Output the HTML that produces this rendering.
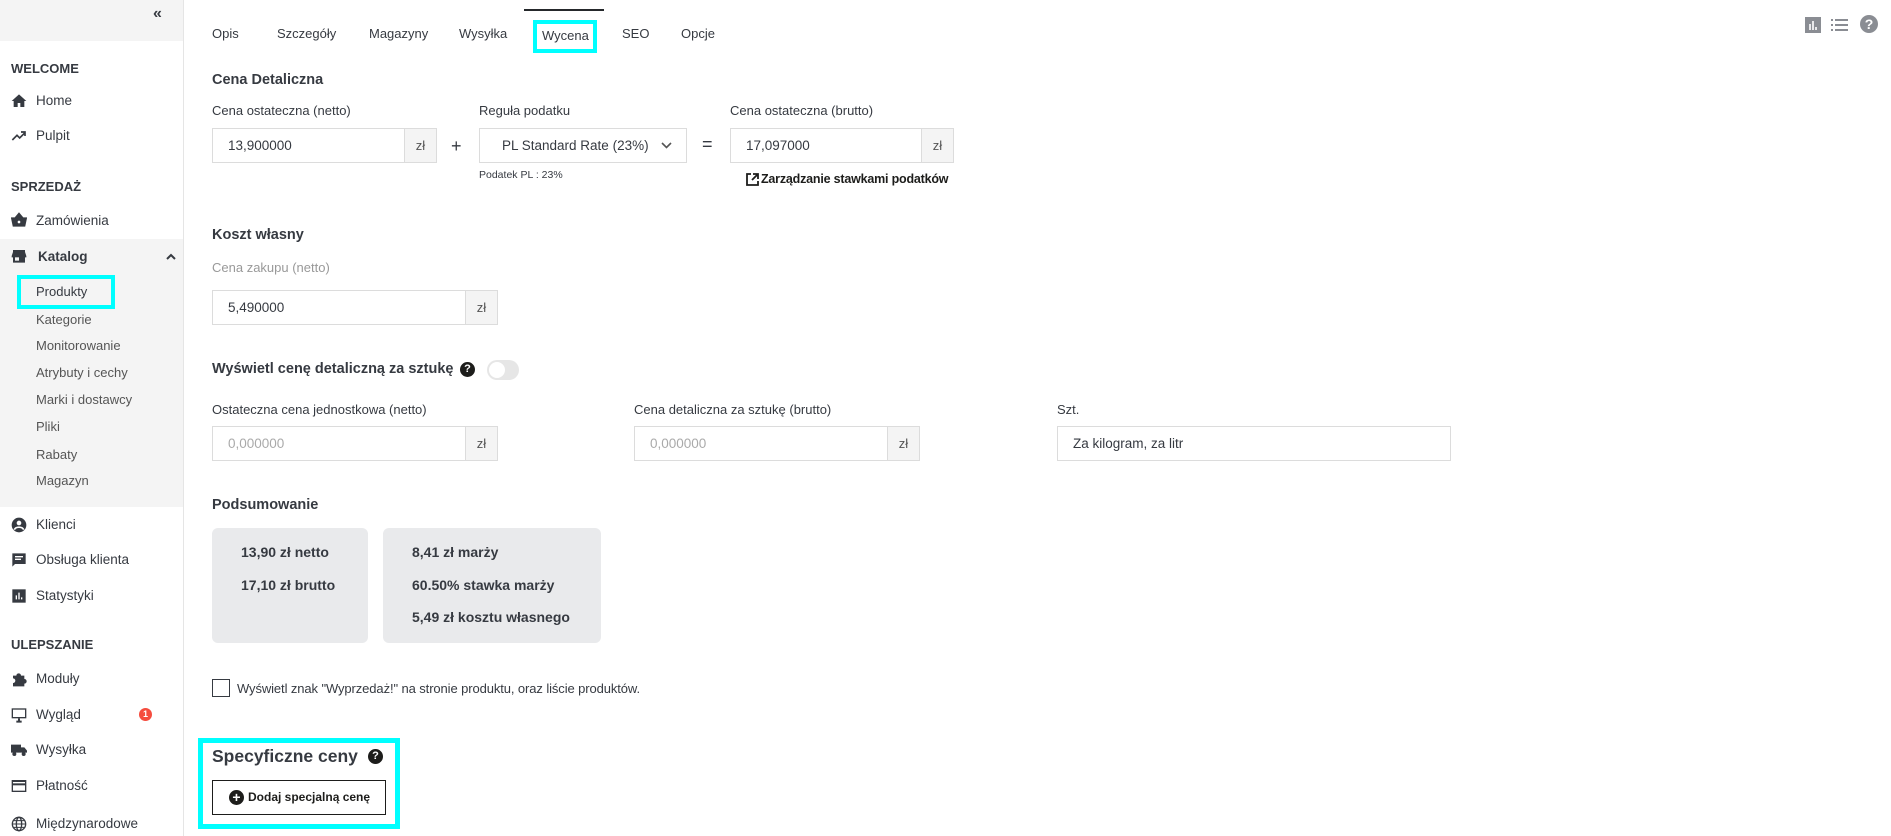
<!DOCTYPE html>
<html><head><meta charset="utf-8"><style>
*{box-sizing:border-box;margin:0;padding:0}
body{width:1891px;height:836px;overflow:hidden;background:#fff;font-family:"Liberation Sans",sans-serif;color:#363a41;font-size:13px;position:relative}
.a{position:absolute;white-space:nowrap}
#sb{position:absolute;left:0;top:0;width:184px;height:836px;background:#fff;border-right:1px solid #e5e5e5}
.sec{font-weight:bold;font-size:13px;color:#363a41}
.it{font-size:13.5px;color:#363a41}
.sub{font-size:13px;color:#555}
.ic{position:absolute;left:11px;width:16px;height:16px}
.lbl{font-size:13px;color:#363a41}
.inp{position:absolute;height:35px;border:1px solid #dcdcdc;background:#fff;font-size:13.5px;padding-left:15px;line-height:33px}
.add{position:absolute;right:0;top:0;bottom:0;width:32px;background:#f4f4f4;border-left:1px solid #dcdcdc;text-align:center;color:#555;font-size:13px}
.h{font-weight:bold;font-size:14.5px}
.box{position:absolute;background:#e9eaec;border-radius:6px;top:528px;height:115px}
.box div{position:absolute;font-weight:bold;font-size:14px;white-space:nowrap}
.q{display:inline-block;width:15px;height:15px;border-radius:50%;background:#1d1d1b;color:#fff;font-size:11px;text-align:center;line-height:15px;font-weight:bold}
</style></head><body>
<div id="sb">
<div style="position:absolute;left:0;top:0;width:183px;height:41px;background:#f4f4f4"></div>
<div class="a" style="left:153px;top:5px;font-size:16px;font-weight:bold;color:#363a41">«</div>
<div class="a sec" style="left:11px;top:61px">WELCOME</div>
<svg class="ic" style="top:93px" viewBox="0 0 24 24"><path d="M10 21v-6h4v6h6v-9h3L12 2 1 12h3v9z" fill="#363a41"/></svg>
<div class="a it" style="left:36px;top:93px">Home</div>
<svg class="ic" style="top:128px" viewBox="0 0 24 24"><path d="M2 18l7-7 4 4 8-8M15 6h6v6" stroke="#363a41" stroke-width="2.5" fill="none"/></svg>
<div class="a it" style="left:36px;top:128px">Pulpit</div>
<div class="a sec" style="left:11px;top:179px">SPRZEDAŻ</div>
<svg class="ic" style="top:212px" viewBox="0 0 24 24"><path d="M1 9h22l-2.5 12h-17z M6 9l6-7 6 7" fill="#363a41" stroke="#363a41" stroke-width="2"/><circle cx="12" cy="15" r="2" fill="#fff"/></svg>
<div class="a it" style="left:36px;top:213px">Zamówienia</div>
<div style="position:absolute;left:0;top:239px;width:183px;height:268px;background:#f4f4f4"></div>
<svg class="ic" style="top:248px" viewBox="0 0 24 24"><path d="M3 3h18v3l2 6v2h-2v8H3v-8H1v-2l2-6z" fill="#363a41"/><rect x="6" y="14" width="6" height="5" fill="#f4f4f4"/></svg>
<div class="a it" style="left:38px;top:249px;font-weight:bold">Katalog</div>
<svg class="a" style="left:166px;top:253px" width="10" height="7" viewBox="0 0 10 7"><path d="M1 6l4-4 4 4" stroke="#363a41" stroke-width="2" fill="none"/></svg>
<div class="a" style="left:17px;top:275px;width:98px;height:34px;border:4px solid #0ff"></div>
<div class="a sub" style="left:36px;top:284px;color:#363a41">Produkty</div>
<div class="a sub" style="left:36px;top:312px">Kategorie</div>
<div class="a sub" style="left:36px;top:338px">Monitorowanie</div>
<div class="a sub" style="left:36px;top:365px">Atrybuty i cechy</div>
<div class="a sub" style="left:36px;top:392px">Marki i dostawcy</div>
<div class="a sub" style="left:36px;top:419px">Pliki</div>
<div class="a sub" style="left:36px;top:447px">Rabaty</div>
<div class="a sub" style="left:36px;top:473px">Magazyn</div>
<svg class="ic" style="top:517px" viewBox="0 0 24 24"><circle cx="12" cy="12" r="11" fill="#363a41"/><circle cx="12" cy="9" r="3.5" fill="#fff"/><path d="M5 19c2-5 12-5 14 0" stroke="#fff" stroke-width="2.5" fill="none"/></svg>
<div class="a it" style="left:36px;top:517px">Klienci</div>
<svg class="ic" style="top:552px" viewBox="0 0 24 24"><path d="M2 2h20v16H6l-4 4z" fill="#363a41"/><path d="M6 7h12M6 11h9" stroke="#fff" stroke-width="2"/></svg>
<div class="a it" style="left:36px;top:552px">Obsługa klienta</div>
<svg class="ic" style="top:588px" viewBox="0 0 24 24"><rect x="2" y="2" width="20" height="20" fill="#363a41"/><path d="M8 17v-6M12 17V7M16 17v-3" stroke="#fff" stroke-width="2"/></svg>
<div class="a it" style="left:36px;top:588px">Statystyki</div>
<div class="a sec" style="left:11px;top:637px">ULEPSZANIE</div>
<svg class="ic" style="top:671px" viewBox="0 0 24 24"><path d="M3 7h5a3.5 3.5 0 017 0h5v5a3.5 3.5 0 010 7v4H3v-5a3.5 3.5 0 000-7z" fill="#363a41"/></svg>
<div class="a it" style="left:36px;top:671px">Moduły</div>
<svg class="ic" style="top:707px" viewBox="0 0 24 24"><rect x="1" y="2" width="22" height="15" fill="#363a41"/><rect x="3" y="4" width="18" height="11" fill="#fff"/><path d="M8 22h8M12 17v5" stroke="#363a41" stroke-width="3"/></svg>
<div class="a it" style="left:36px;top:707px">Wygląd</div>
<div class="a" style="left:139px;top:708px;width:13px;height:13px;border-radius:50%;background:#f54c3e;color:#fff;font-size:9px;text-align:center;line-height:13px;font-weight:bold">1</div>
<svg class="ic" style="top:742px" viewBox="0 0 24 24"><path d="M0 4h15v12H0zM15 8h5l4 5v3h-9z" fill="#363a41"/><circle cx="5" cy="18" r="3" fill="#363a41"/><circle cx="19" cy="18" r="3" fill="#363a41"/></svg>
<div class="a it" style="left:36px;top:742px">Wysyłka</div>
<svg class="ic" style="top:778px" viewBox="0 0 24 24"><rect x="1" y="3" width="22" height="18" fill="#363a41"/><rect x="3" y="6" width="18" height="2" fill="#fff"/><rect x="3" y="11" width="18" height="8" fill="#fff"/></svg>
<div class="a it" style="left:36px;top:778px">Płatność</div>
<svg class="ic" style="top:816px" viewBox="0 0 24 24"><circle cx="12" cy="12" r="10" stroke="#363a41" stroke-width="2" fill="none"/><ellipse cx="12" cy="12" rx="4" ry="10" stroke="#363a41" stroke-width="2" fill="none"/><path d="M2 12h20M4 7h16M4 17h16" stroke="#363a41" stroke-width="1.5"/></svg>
<div class="a it" style="left:36px;top:816px">Międzynarodowe</div>
</div>

<div class="a" style="left:524px;top:9px;width:80px;height:2px;background:#25282b"></div>
<div class="a lbl" style="left:212px;top:26px">Opis</div>
<div class="a lbl" style="left:277px;top:26px">Szczegóły</div>
<div class="a lbl" style="left:369px;top:26px">Magazyny</div>
<div class="a lbl" style="left:459px;top:26px">Wysyłka</div>
<div class="a" style="left:533px;top:20px;width:64px;height:33px;border:4px solid #0ff"></div>
<div class="a lbl" style="left:542px;top:28px">Wycena</div>
<div class="a lbl" style="left:622px;top:26px">SEO</div>
<div class="a lbl" style="left:681px;top:26px">Opcje</div>
<svg class="a" style="left:1805px;top:17px" width="16" height="16" viewBox="0 0 16 16"><rect width="16" height="16" fill="#8a8d93"/><path d="M5 13V7M8 13V4M11 13v-3" stroke="#fff" stroke-width="1.6"/></svg>
<svg class="a" style="left:1831px;top:18px" width="17" height="14" viewBox="0 0 17 14"><path d="M0 2h2M0 7h2M0 12h2M4 2h13M4 7h13M4 12h13" stroke="#8a8d93" stroke-width="2"/></svg>
<div class="a" style="left:1860px;top:15px;width:18px;height:18px;border-radius:50%;background:#8a8d93;color:#fff;font-weight:bold;font-size:14px;text-align:center;line-height:18px">?</div>

<div class="a h" style="left:212px;top:72px">Cena Detaliczna</div>
<div class="a lbl" style="left:212px;top:103px">Cena ostateczna (netto)</div>
<div class="inp" style="left:212px;top:128px;width:225px">13,900000<div class="add">zł</div></div>
<div class="a" style="left:451px;top:136px;font-size:18px">+</div>
<div class="a lbl" style="left:479px;top:103px">Reguła podatku</div>
<div class="inp" style="left:479px;top:128px;width:208px;padding-left:22px">PL Standard Rate (23%)<svg style="position:absolute;right:14px;top:13px" width="11" height="8" viewBox="0 0 11 8"><path d="M1 1l4.5 4.5L10 1" stroke="#555" stroke-width="1.6" fill="none"/></svg></div>
<div class="a" style="left:479px;top:169px;font-size:10.5px">Podatek PL : 23%</div>
<div class="a" style="left:702px;top:134px;font-size:18px">=</div>
<div class="a lbl" style="left:730px;top:103px">Cena ostateczna (brutto)</div>
<div class="inp" style="left:730px;top:128px;width:224px">17,097000<div class="add">zł</div></div>
<svg class="a" style="left:746px;top:173px" width="13" height="13" viewBox="0 0 13 13"><path d="M5 1H1v11h11V8M7 1h5v5M12 1L6 7" stroke="#1d1d1b" stroke-width="1.8" fill="none"/></svg>
<div class="a" style="left:761px;top:172px;font-weight:bold;font-size:12.5px;color:#1d1d1b;letter-spacing:-0.2px">Zarządzanie stawkami podatków</div>

<div class="a h" style="left:212px;top:227px">Koszt własny</div>
<div class="a lbl" style="left:212px;top:260px;color:#999">Cena zakupu (netto)</div>
<div class="inp" style="left:212px;top:290px;width:286px">5,490000<div class="add">zł</div></div>

<div class="a h" style="left:212px;top:361px">Wyświetl cenę detaliczną za sztukę</div>
<div class="a q" style="left:460px;top:362px">?</div>
<div class="a" style="left:487px;top:360px;width:32px;height:20px;border-radius:10px;background:#e6e6e6"><div style="position:absolute;left:2px;top:2px;width:16px;height:16px;border-radius:50%;background:#fff"></div></div>

<div class="a lbl" style="left:212px;top:402px">Ostateczna cena jednostkowa (netto)</div>
<div class="inp" style="left:212px;top:426px;width:286px;color:#aaa">0,000000<div class="add">zł</div></div>
<div class="a lbl" style="left:634px;top:402px">Cena detaliczna za sztukę (brutto)</div>
<div class="inp" style="left:634px;top:426px;width:286px;color:#aaa">0,000000<div class="add">zł</div></div>
<div class="a lbl" style="left:1057px;top:402px">Szt.</div>
<div class="inp" style="left:1057px;top:426px;width:394px;padding-left:15px">Za kilogram, za litr</div>

<div class="a h" style="left:212px;top:497px">Podsumowanie</div>
<div class="box" style="left:212px;width:156px"><div style="left:29px;top:16px">13,90 zł netto</div><div style="left:29px;top:49px">17,10 zł brutto</div></div>
<div class="box" style="left:383px;width:218px"><div style="left:29px;top:16px">8,41 zł marży</div><div style="left:29px;top:49px">60.50% stawka marży</div><div style="left:29px;top:81px">5,49 zł kosztu własnego</div></div>

<div class="a" style="left:212px;top:679px;width:18px;height:18px;border:1px solid #363a41;background:#fff"></div>
<div class="a lbl" style="left:237px;top:681px;letter-spacing:-0.1px">Wyświetl znak "Wyprzedaż!" na stronie produktu, oraz liście produktów.</div>

<div class="a" style="left:198px;top:738px;width:202px;height:91px;border:5px solid #0ff"></div>
<div class="a" style="left:212px;top:746px;font-weight:bold;font-size:17.5px">Specyficzne ceny</div>
<div class="a q" style="left:368px;top:749px">?</div>
<div class="a" style="left:212px;top:780px;width:174px;height:35px;border:1.5px solid #1d1d1b;background:#fff"></div>
<div class="a" style="left:229px;top:790px;width:15px;height:15px;border-radius:50%;background:#1d1d1b;color:#fff;font-weight:bold;font-size:14px;text-align:center;line-height:15px">+</div>
<div class="a" style="left:248px;top:790px;font-weight:bold;font-size:12px;color:#1d1d1b">Dodaj specjalną cenę</div>
</body></html>
